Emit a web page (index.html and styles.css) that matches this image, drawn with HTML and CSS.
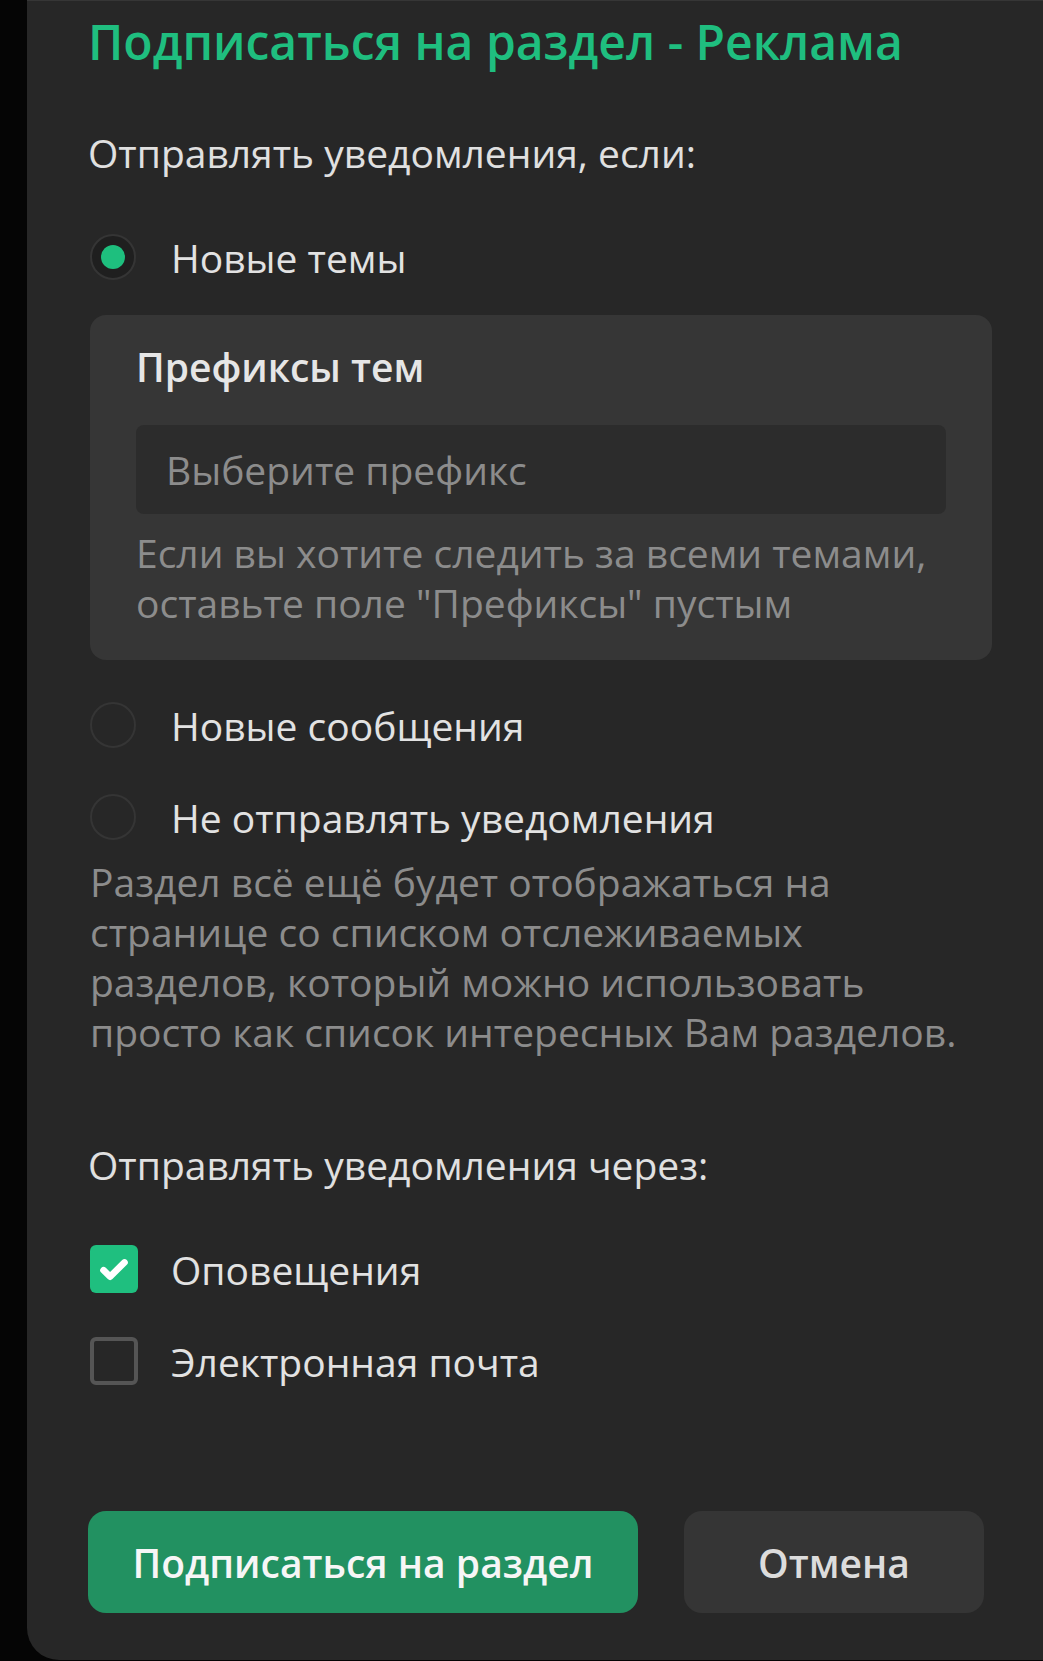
FILE: index.html
```html
<!DOCTYPE html>
<html lang="ru">
<head>
<meta charset="utf-8">
<link rel="stylesheet" href="styles.css">
</head>
<body>
<div class="panel">
  <h1 class="title">Подписаться на раздел - Реклама</h1>

  <div class="label">Отправлять уведомления, если:</div>

  <div class="options">
    <div class="option">
      <span class="radio checked"><span class="dot"></span></span>
      <span class="opt-text">Новые темы</span>
    </div>

    <div class="subbox">
      <div class="sub-title">Префиксы тем</div>
      <div class="input">Выберите префикс</div>
      <div class="hint">Если вы хотите следить за всеми темами, оставьте поле "Префиксы" пустым</div>
    </div>

    <div class="option opt-gap">
      <span class="radio"></span>
      <span class="opt-text">Новые сообщения</span>
    </div>
    <div class="option opt-gap2">
      <span class="radio"></span>
      <span class="opt-text">Не отправлять уведомления</span>
    </div>
    <div class="desc">Раздел всё ещё будет отображаться на странице со списком отслеживаемых разделов, который можно использовать просто как список интересных Вам разделов.</div>
  </div>

  <div class="label label2">Отправлять уведомления через:</div>

  <div class="checks">
    <div class="option">
      <span class="check on">
        <svg viewBox="0 0 24 24" width="36" height="36"><path d="M5 12.8l4.4 4.3L19 7.6" fill="none" stroke="#fff" stroke-width="4.4" stroke-linecap="round" stroke-linejoin="round"/></svg>
      </span>
      <span class="opt-text">Оповещения</span>
    </div>
    <div class="option check-gap">
      <span class="check"></span>
      <span class="opt-text">Электронная почта</span>
    </div>
  </div>

  <div class="buttons">
    <button class="btn primary">Подписаться на раздел</button>
    <button class="btn secondary">Отмена</button>
  </div>
</div>
</body>
</html>
```

FILE: styles.css
```css
html, body {
  margin: 0;
  padding: 0;
  background: #050505;
}
body {
  font-family: "Open Sans", "Noto Sans", sans-serif;
  color: #e2e2e2;
}
.panel {
  margin-left: 27px;
  min-height: 1660px;
  box-sizing: border-box;
  background: #272727;
  border-top: 1px solid #363636;
  border-bottom-left-radius: 32px;
  padding: 10px 40px 0 61px;
}
.title {
  margin: 0;
  font-size: 48px;
  line-height: 62px;
  font-weight: 600;
  color: #1fbe7f;
  white-space: nowrap;
}
.label {
  margin-top: 55px;
  font-size: 39px;
  line-height: 50px;
  color: #e0e0e0;
  white-space: nowrap;
}
.label2 {
  margin-top: 83px;
}
.options {
  margin-top: 54px;
}
.option {
  display: flex;
  align-items: center;
  height: 50px;
}
.opt-gap { margin-top: 40px; }
.opt-gap2 { margin-top: 42px; }
.check-gap { margin-top: 42px; }
.radio {
  width: 46px;
  height: 46px;
  box-sizing: border-box;
  border-radius: 50%;
  border: 2px solid #353535;
  margin-left: 2px;
  display: flex;
  align-items: center;
  justify-content: center;
  flex: none;
}
.radio.checked {
  background: #1f1f1f;
  border-color: #353535;
}
.dot {
  width: 24px;
  height: 24px;
  border-radius: 50%;
  background: #1ebf7e;
}
.opt-text {
  margin-left: 35px;
  font-size: 39px;
  color: #e2e2e2;
  white-space: nowrap;
}
.subbox {
  margin-top: 33px;
  margin-left: 2px;
  width: 902px;
  box-sizing: border-box;
  background: #363636;
  border-radius: 16px;
  padding: 27px 46px 32px 46px;
}
.sub-title {
  font-size: 39px;
  line-height: 50px;
  font-weight: 600;
  color: #e6e6e6;
}
.input {
  margin-top: 33px;
  height: 89px;
  box-sizing: border-box;
  background: #2c2c2c;
  border-radius: 8px;
  padding-left: 30px;
  display: flex;
  align-items: center;
  font-size: 39px;
  color: #8c8c8c;
}
.hint {
  margin-top: 14px;
  font-size: 39px;
  line-height: 50px;
  color: #8c8c8c;
}
.desc {
  margin-top: 15px;
  margin-left: 2px;
  width: 885px;
  font-size: 39px;
  line-height: 50px;
  color: #8c8c8c;
}
.checks {
  margin-top: 54px;
}
.check {
  width: 48px;
  height: 48px;
  box-sizing: border-box;
  border-radius: 6px;
  border: 4px solid #555;
  margin-left: 2px;
  flex: none;
  display: flex;
  align-items: center;
  justify-content: center;
}
.check.on {
  background: #1fbf7f;
  border: none;
}
.check + .opt-text {
  margin-left: 33px;
}
.buttons {
  display: flex;
  gap: 46px;
  margin-top: 125px;
}
.btn {
  font-family: inherit;
  font-size: 39px;
  font-weight: 600;
  height: 102px;
  border-radius: 18px;
  border: none;
  padding: 0;
}
.primary {
  width: 550px;
  background: #229161;
  color: #f6f6f6;
}
.secondary {
  width: 300px;
  background: #353535;
  color: #dcdcdc;
}
```
